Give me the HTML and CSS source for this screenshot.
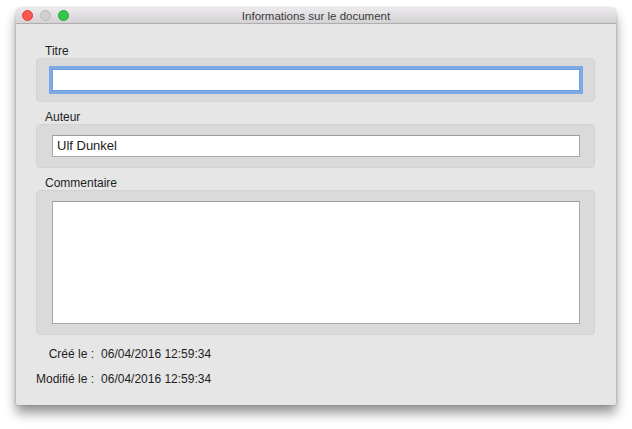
FILE: index.html
```html
<!DOCTYPE html>
<html lang="fr">
<head>
<meta charset="utf-8">
<title>Informations sur le document</title>
<link rel="stylesheet" href="styles.css">
</head>
<body>
<div class="window">
  <div class="titlebar">
    <div class="lights">
      <span class="light red"></span>
      <span class="light gray"></span>
      <span class="light green"></span>
    </div>
    <div class="title">Informations sur le document</div>
  </div>
  <div class="content">
    <div class="label">Titre</div>
    <div class="group">
      <div class="field focused"></div>
    </div>
    <div class="label">Auteur</div>
    <div class="group">
      <div class="field">Ulf Dunkel</div>
    </div>
    <div class="label">Commentaire</div>
    <div class="group">
      <div class="field area"></div>
    </div>
    <div class="meta">
      <div class="meta-label">Créé le :</div>
      <div class="meta-value">06/04/2016 12:59:34</div>
      <div class="meta-label">Modifié le :</div>
      <div class="meta-value">06/04/2016 12:59:34</div>
    </div>
  </div>
</div>
</body>
</html>
```
FILE: styles.css
```css
html, body {
  margin: 0;
  padding: 0;
  background: #ffffff;
}
body {
  box-sizing: border-box;
  min-height: 429px;
  padding: 8px 0 24px 16px;
  font-family: "Liberation Sans", Arial, sans-serif;
  color: #1e1e1e;
}
.window {
  width: 600px;
  height: 397px;
  background: #e6e6e6;
  border-radius: 5px 5px 2px 2px;
  box-shadow: 0 8px 12px rgba(0,0,0,0.42), 0 0 3px rgba(0,0,0,0.2);
  display: flex;
  flex-direction: column;
  overflow: hidden;
}
.titlebar {
  position: relative;
  height: 15px;
  flex: none;
  background: linear-gradient(#ebe9eb, #d4d2d4);
  border-bottom: 1px solid #aeaeae;
  display: flex;
  align-items: center;
  justify-content: center;
}
.lights {
  position: absolute;
  left: 6px;
  top: 2px;
  display: flex;
  gap: 7px;
}
.light {
  width: 11px;
  height: 11px;
  border-radius: 50%;
  box-sizing: border-box;
}
.red { background: #fc5753; border: 1px solid #df3e3a; }
.gray { background: #d0ced0; border: 1px solid #bbb9bb; }
.green { background: #34c84a; border: 1px solid #23a936; }
.title {
  font-size: 11.5px;
  color: #3a3a3a;
  line-height: 15px;
  padding-top: 1px;
}
.content {
  padding: 20px 21px 0 20px;
  display: flex;
  flex-direction: column;
}
.label {
  font-size: 12px;
  line-height: 14px;
  height: 14px;
  padding-left: 9px;
}
.group {
  background: #dadada;
  border: 1px solid #d3d3d3;
  border-radius: 4px;
  padding: 10px 14px 10px 15px;
  margin-bottom: 8px;
}
.field {
  box-sizing: border-box;
  height: 22px;
  background: #ffffff;
  border: 1px solid #a8a8a8;
  border-top-color: #9c9c9c;
  font-size: 13px;
  line-height: 20px;
  padding-left: 4px;
  color: #1a1a1a;
}
.field.focused {
  border-color: #6f9fe0;
  box-shadow: 0 0 0 3px #7eaae8;
}
.field.area {
  height: 123px;
}
.meta {
  display: grid;
  grid-template-columns: max-content auto;
  column-gap: 7px;
  row-gap: 11px;
  margin-top: 4px;
  font-size: 12px;
  line-height: 14px;
  white-space: nowrap;
}
.meta-label {
  text-align: right;
}
```
